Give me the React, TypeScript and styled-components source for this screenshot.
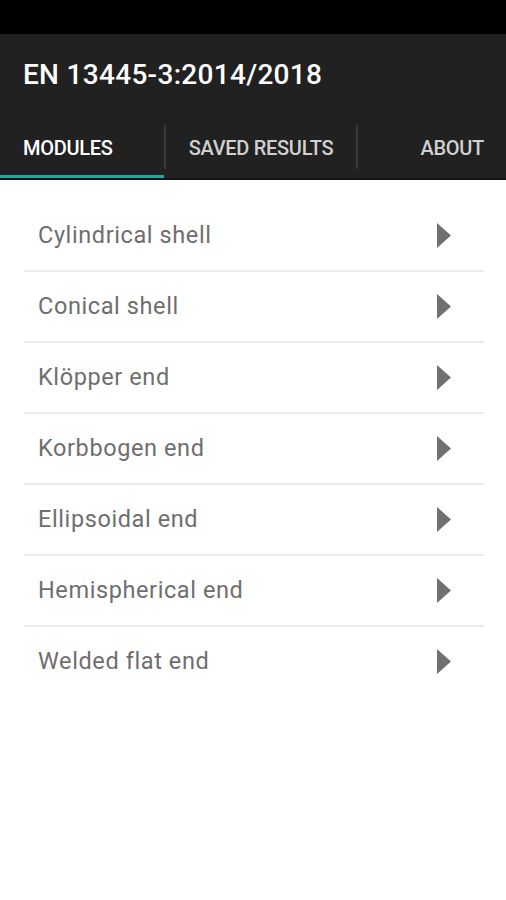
import React from "react";
import styled, { createGlobalStyle } from "styled-components";

const Global = createGlobalStyle`
  html, body { margin: 0; padding: 0; background: #ffffff; }
  body { font-family: Roboto, "Noto Sans", Arial, sans-serif; }
  * { box-sizing: border-box; }
`;

const Screen = styled.div`
  width: 506px;
  height: 900px;
  background: #ffffff;
  display: flex;
  flex-direction: column;
`;

const StatusBar = styled.div`
  height: 34px;
  background: #000000;
`;

const AppBar = styled.header`
  background: #212121;
  display: flex;
  flex-direction: column;
  border-bottom: 2px solid #141414;
`;

const Title = styled.h1`
  margin: 0;
  height: 90px;
  display: flex;
  align-items: center;
  padding-left: 23px;
  padding-bottom: 10px;
  font-family: Roboto, sans-serif;
  font-weight: 500;
  font-size: 28px;
  color: #ffffff;
  letter-spacing: 0.3px;
`;

const Tabs = styled.nav`
  display: flex;
  height: 54px;
  align-items: stretch;
`;

const Tab = styled.div<{ $active?: boolean; $width: number; $align: string; $pad: number }>`
  width: ${(p) => p.$width}px;
  display: flex;
  align-items: center;
  justify-content: ${(p) => p.$align};
  padding: 0 ${(p) => p.$pad}px 4px ${(p) => p.$pad}px;
  font-family: Roboto, sans-serif;
  font-weight: 500;
  font-size: 20px;
  letter-spacing: -0.3px;
  color: ${(p) => (p.$active ? "#ffffff" : "#d0d0d0")};
  border-bottom: 3px solid ${(p) => (p.$active ? "#26a69a" : "transparent")};
`;

const Divider = styled.div`
  width: 2px;
  margin: 1px 0 9px;
  background: #3a3a3a;
`;

const List = styled.ul`
  list-style: none;
  margin: 0;
  padding: 21px 22px 0 24px;
`;

const Row = styled.li<{ $last?: boolean }>`
  height: 71px;
  display: flex;
  align-items: center;
  justify-content: space-between;
  padding: 0 33px 0 14px;
  border-bottom: 2px solid ${(p) => (p.$last ? "transparent" : "#ebebeb")};
`;

const Label = styled.span`
  font-family: Roboto, sans-serif;
  font-size: 23.5px;
  letter-spacing: 0.6px;
  color: #6e6e6e;
  padding-bottom: 1px;
`;

const Arrow = styled.svg`
  width: 14px;
  height: 25px;
  flex: none;
`;

const items = [
  "Cylindrical shell",
  "Conical shell",
  "Klöpper end",
  "Korbbogen end",
  "Ellipsoidal end",
  "Hemispherical end",
  "Welded flat end",
];

export default function App() {
  return (
    <>
      <Global />
      <Screen>
        <StatusBar />
        <AppBar>
          <Title>EN 13445-3:2014/2018</Title>
          <Tabs>
            <Tab $active $width={164} $align="flex-start" $pad={23}>MODULES</Tab>
            <Divider />
            <Tab $width={190} $align="center" $pad={0}>SAVED RESULTS</Tab>
            <Divider />
            <Tab $width={148} $align="flex-end" $pad={22}>ABOUT</Tab>
          </Tabs>
        </AppBar>
        <List>
          {items.map((t, i) => (
            <Row key={t} $last={i === items.length - 1}>
              <Label>{t}</Label>
              <Arrow viewBox="0 0 14 25">
                <polygon points="0,0 14,12.5 0,25" fill="#707070" />
              </Arrow>
            </Row>
          ))}
        </List>
      </Screen>
    </>
  );
}
